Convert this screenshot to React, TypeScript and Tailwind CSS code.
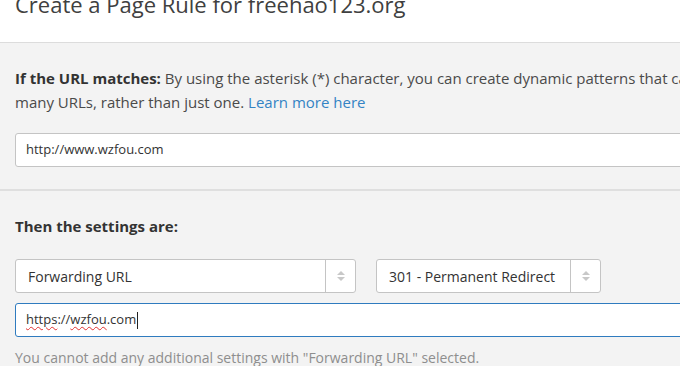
import { useState } from 'react';

function SelectBox({ value, width }: { value: string; width: string }) {
  return (
    <div className={`flex h-[34px] items-stretch rounded-[3px] border border-[#c4c4c4] bg-white ${width}`}>
      <div className="flex flex-1 items-center pl-[12px] text-[14px] text-[#333]">{value}</div>
      <div className="flex w-[30px] flex-col items-center justify-center gap-[2px] border-l border-[#c4c4c4]">
        <span className="block h-0 w-0 border-x-[4px] border-b-[4px] border-x-transparent border-b-[#c8c8c8]" />
        <span className="block h-0 w-0 border-x-[4px] border-t-[4px] border-x-transparent border-t-[#c8c8c8]" />
      </div>
    </div>
  );
}

export default function App() {
  const [target] = useState('https://wzfou.com');

  return (
    <div className="h-[366px] w-[680px] overflow-hidden bg-[#f3f3f3] font-['Open_Sans',sans-serif]">
      <div className="w-[800px]">
        {/* ── Header ─────────────────────────────────────────── */}
        <div className="h-[43px] overflow-hidden border-b border-[#dcdcdc] bg-white px-[15px]">
          <h1 className="mt-[-11px] text-[22px] leading-[30px] font-normal text-[#404040]">
            Create a Page Rule for freehao123.org
          </h1>
        </div>

        {/* ── URL match ──────────────────────────────────────── */}
        <div className="border-b-2 border-[#dfdfdf] px-[15px] pt-[23px] pb-[22px]">
          <p className="w-[750px] text-[15px] leading-[24px] text-[#4a4a4a]">
            <span className="font-bold text-[#333]">If the URL matches:</span> By using the asterisk (*) character, you
            can create dynamic patterns that can match many URLs, rather than just one.{' '}
            <a className="text-[#3483c4]">Learn more here</a>
          </p>
          <div className="mt-[19px] flex h-[34px] items-center rounded-[3px] border border-[#c4c4c4] bg-white pl-[10px] text-[13px] text-[#333]">
            http://www.wzfou.com
          </div>
        </div>

        {/* ── Settings ───────────────────────────────────────── */}
        <div className="px-[15px] pt-[23px]">
          <p className="text-[15px] leading-[24px] font-bold text-[#333]">Then the settings are:</p>
          <div className="mt-[21px] flex gap-[20px]">
            <SelectBox value="Forwarding URL" width="w-[341px]" />
            <SelectBox value="301 - Permanent Redirect" width="w-[225px]" />
          </div>
          <div className="mt-[10px] flex h-[34px] items-center rounded-[3px] border border-[#2f7bbf] bg-white pl-[10px] text-[13px] text-[#333]">
            <span className="underline decoration-[#e03030] decoration-wavy decoration-1 underline-offset-[2px]">https</span>
            <span>://</span>
            <span className="underline decoration-[#e03030] decoration-wavy decoration-1 underline-offset-[2px]">wzfou</span>
            <span>.com</span>
            <span className="ml-[1px] inline-block h-[17px] w-px bg-[#222]" />
            <span className="sr-only">{target}</span>
          </div>
          <p className="mt-[9px] text-[14px] leading-[24px] text-[#8e8e8e]">
            You cannot add any additional settings with "Forwarding URL" selected.
          </p>
        </div>
      </div>
    </div>
  );
}
